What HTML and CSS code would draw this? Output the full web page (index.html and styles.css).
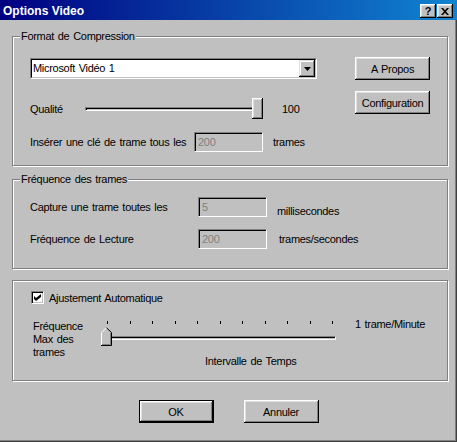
FILE: index.html
```html
<!DOCTYPE html>
<html lang="fr">
<head>
<meta charset="utf-8">
<title>Options Video</title>
<link rel="stylesheet" href="styles.css">
</head>
<body>
<div class="window">
  <div class="titlebar">
    <span class="title">Options Video</span>
    <div class="tbtns">
      <span class="tbtn help">?</span>
      <span class="tbtn close"><svg width="8" height="7" viewBox="0 0 8 7"><path d="M0 0h2l2 2.3 2-2.3h2l-3 3.5 3 3.5h-2l-2-2.3-2 2.3h-2l3-3.5z" fill="#000"/></svg></span>
    </div>
  </div>
  <div class="content">
    <fieldset class="group g1">
      <legend>Format de Compression</legend>
      <div class="g1-grid">
        <div class="g1-left">
          <div class="combo">
            <div class="combo-inner">
              <span class="combo-text">Microsoft Vidéo 1</span>
              <span class="combo-btn"><svg width="7" height="4" viewBox="0 0 7 4"><path d="M0 0h7l-3.5 4z" fill="#000"/></svg></span>
            </div>
          </div>
          <div class="row slider-row">
            <span class="lbl-q">Qualité</span>
            <span class="track track1"></span>
            <span class="thumb1"></span>
            <span class="val">100</span>
          </div>
          <div class="row input-row">
            <span class="lbl-ins">Insérer une clé de trame tous les</span>
            <span class="edit">200</span>
            <span class="unit">trames</span>
          </div>
        </div>
        <div class="g1-right">
          <button class="btn">A Propos</button>
          <button class="btn btn-conf">Configuration</button>
        </div>
      </div>
    </fieldset>

    <fieldset class="group g2">
      <legend>Fréquence des trames</legend>
      <div class="g2-body">
        <div class="row frow">
          <span class="lbl-f">Capture une trame toutes les</span>
          <span class="edit">5</span>
          <span class="unit unit-ms">millisecondes</span>
        </div>
        <div class="row frow frow2">
          <span class="lbl-f">Fréquence de Lecture</span>
          <span class="edit">200</span>
          <span class="unit unit-fps">trames/secondes</span>
        </div>
      </div>
    </fieldset>

    <fieldset class="group g3">
      <div class="check-row">
        <span class="checkbox"><svg width="7" height="7" viewBox="0 0 7 7"><path d="M0 2l2 2 5-4v3l-5 4-2-2z" fill="#000"/></svg></span>
        <span class="check-label">Ajustement Automatique</span>
      </div>
      <div class="slider2-row">
        <div class="freq-label">Fréquence<br>Max des<br>trames</div>
        <div class="slider2-col">
          <div class="slider2">
            <div class="ticks"><i></i><i></i><i></i><i></i><i></i><i></i><i></i><i></i><i></i><i></i><i></i></div>
            <div class="track track2"></div>
            <svg class="thumb2" width="11" height="19" viewBox="0 0 11 19">
              <path d="M0 19V5L5.5 0 11 5v14z" fill="#c0c0c0"/>
              <path d="M0.5 18V5.5L5.5 0.8" stroke="#fff" fill="none"/>
              <path d="M5.5 0.8L10.5 5.5V18.5H0" stroke="#000" fill="none"/>
              <path d="M9.5 6V17.5H1" stroke="#808080" fill="none"/>
            </svg>
          </div>
          <div class="caption">Intervalle de Temps</div>
        </div>
        <div class="max-label">1 trame/Minute</div>
      </div>
    </fieldset>

    <div class="actions">
      <button class="btn btn-default">OK</button>
      <button class="btn">Annuler</button>
    </div>
  </div>
</div>
</body>
</html>
```

FILE: styles.css
```css
* { box-sizing: border-box; }

body {
  margin: 0;
  font-family: "Liberation Sans", Arial, sans-serif;
  font-size: 11px;
  letter-spacing: -0.3px;
  word-spacing: 1px;
  color: #000;
}

.window {
  width: 457px;
  height: 442px;
  background: #c0c0c0;
  box-shadow: inset -1px -1px 0 #404040, inset -2px -2px 0 #808080;
  overflow: hidden;
}

.titlebar {
  height: 20px;
  display: flex;
  justify-content: space-between;
  align-items: flex-start;
  padding: 0 4px 0 3px;
  background: linear-gradient(to right, #000080, #1084d0);
}

.title {
  color: #fff;
  font-weight: bold;
  font-size: 12px;
  line-height: 14px;
  padding-top: 4px;
  letter-spacing: 0;
  word-spacing: 0;
}

.tbtns {
  display: flex;
  gap: 1px;
  margin-top: 4px;
}

.tbtn {
  width: 16px;
  height: 14px;
  background: #c0c0c0;
  box-shadow: inset -1px -1px 0 #000, inset 1px 1px 0 #fff, inset -2px -2px 0 #808080, inset 2px 2px 0 #dfdfdf;
  display: flex;
  align-items: center;
  justify-content: center;
}

.tbtn.help {
  font-weight: bold;
  font-size: 11px;
  line-height: 14px;
  letter-spacing: 0;
}

.content {
  padding-top: 10px;
}

.group {
  margin: 0 0 0 12px;
  width: 436px;
  min-width: 0;
  padding: 0;
  border: 1px solid #808080;
  box-shadow: 1px 1px 0 #fff, inset 1px 1px 0 #fff;
}

legend {
  margin-left: 7px;
  padding: 0 1px;
  line-height: 13px;
  background: #c0c0c0;
}

/* Group 1 */
.g1 {
  padding-top: 14px;
  padding-bottom: 13px;
}

.g1-grid {
  display: grid;
  grid-template-columns: 300px 75px;
  column-gap: 25px;
  align-items: start;
  padding-left: 17px;
}

.combo {
  margin-top: 1px;
  width: 287px;
  height: 21px;
  border: 1px solid;
  border-color: #808080 #fff #fff #808080;
}

.combo-inner {
  height: 100%;
  display: flex;
  background: #fff;
  border: 1px solid;
  border-color: #000 #c0c0c0 #c0c0c0 #000;
}

.combo-text {
  flex: 1;
  padding-left: 1px;
  line-height: 17px;
}

.combo-btn {
  width: 16px;
  height: 17px;
  background: #c0c0c0;
  box-shadow: inset -1px -1px 0 #000, inset 1px 1px 0 #dfdfdf, inset -2px -2px 0 #808080, inset 2px 2px 0 #fff;
  display: flex;
  align-items: center;
  justify-content: center;
}

.row {
  display: flex;
  align-items: center;
}

.slider-row {
  margin-top: 19px;
  height: 21px;
}

.lbl-q {
  width: 55px;
}

.track {
  height: 4px;
  border-top: 1px solid #808080;
  border-left: 1px solid #808080;
  border-bottom: 1px solid #fff;
  border-right: 1px solid #fff;
  box-shadow: inset 1px 1px 0 #000;
}

.track1 {
  width: 168px;
}

.thumb1 {
  width: 11px;
  height: 21px;
  margin-left: -1px;
  background: #c0c0c0;
  box-shadow: inset -1px -1px 0 #000, inset 1px 1px 0 #fff, inset -2px -2px 0 #808080, inset 2px 2px 0 #dfdfdf;
}

.val {
  margin-left: 19px;
}

.input-row {
  margin-top: 13px;
  height: 20px;
}

.lbl-ins {
  width: 164px;
}

.edit {
  width: 69px;
  height: 20px;
  border: 1px solid;
  border-color: #808080 #fff #fff #808080;
  box-shadow: inset 1px 1px 0 #000;
  color: #808080;
  padding-left: 3px;
  line-height: 18px;
}

.unit {
  margin-left: 10px;
}

.g1-right {
  display: flex;
  flex-direction: column;
}

.btn {
  width: 75px;
  height: 23px;
  padding: 0;
  border: none;
  background: #c0c0c0;
  font: inherit;
  letter-spacing: inherit;
  word-spacing: inherit;
  color: #000;
  box-shadow: inset -1px -1px 0 #000, inset 1px 1px 0 #fff, inset -2px -2px 0 #808080, inset 2px 2px 0 #dfdfdf;
}

.btn-conf {
  margin-top: 11px;
}

.btn-default {
  border: 1px solid #000;
}

/* Group 2 */
.g2 {
  margin-top: 7px;
  padding-top: 11px;
  padding-bottom: 19px;
}

.g2-body {
  padding-left: 17px;
}

.frow {
  height: 20px;
}

.frow2 {
  margin-top: 12px;
}

.lbl-f {
  width: 168px;
}

.unit-ms {
  margin-top: 8px;
}

.unit-fps {
  margin-left: 12px;
}

/* Group 3 */
.g3 {
  margin-top: 11px;
  padding: 10px 0 12px 0;
}

.check-row {
  display: flex;
  align-items: center;
  height: 13px;
  padding-left: 18px;
}

.checkbox {
  width: 13px;
  height: 13px;
  background: #fff;
  border: 1px solid;
  border-color: #808080 #fff #fff #808080;
  box-shadow: inset 1px 1px 0 #000, inset -1px -1px 0 #c0c0c0;
  display: flex;
  align-items: center;
  justify-content: center;
}

.check-label {
  margin-left: 5px;
}

.slider2-row {
  display: flex;
  align-items: flex-start;
  margin-top: 14px;
  padding-left: 20px;
}

.freq-label {
  width: 68px;
  padding-top: 2px;
  line-height: 13px;
}

.slider2-col {
  width: 236px;
}

.slider2 {
  position: relative;
  height: 25px;
  margin-top: 3px;
}

.ticks {
  display: flex;
  justify-content: space-between;
  width: 226px;
  height: 3px;
  margin: 1px 0 0 6px;
}

.ticks i {
  width: 1px;
  height: 3px;
  background: #000;
}

.track2 {
  width: 226px;
  margin: 12px 0 0 9px;
}

.thumb2 {
  position: absolute;
  left: 0;
  top: 6px;
}

.caption {
  margin: 9px 0 0 104px;
  line-height: 13px;
}

.max-label {
  margin-left: 18px;
  line-height: 13px;
}

.actions {
  display: flex;
  justify-content: center;
  gap: 30px;
  margin-top: 19px;
}
```
